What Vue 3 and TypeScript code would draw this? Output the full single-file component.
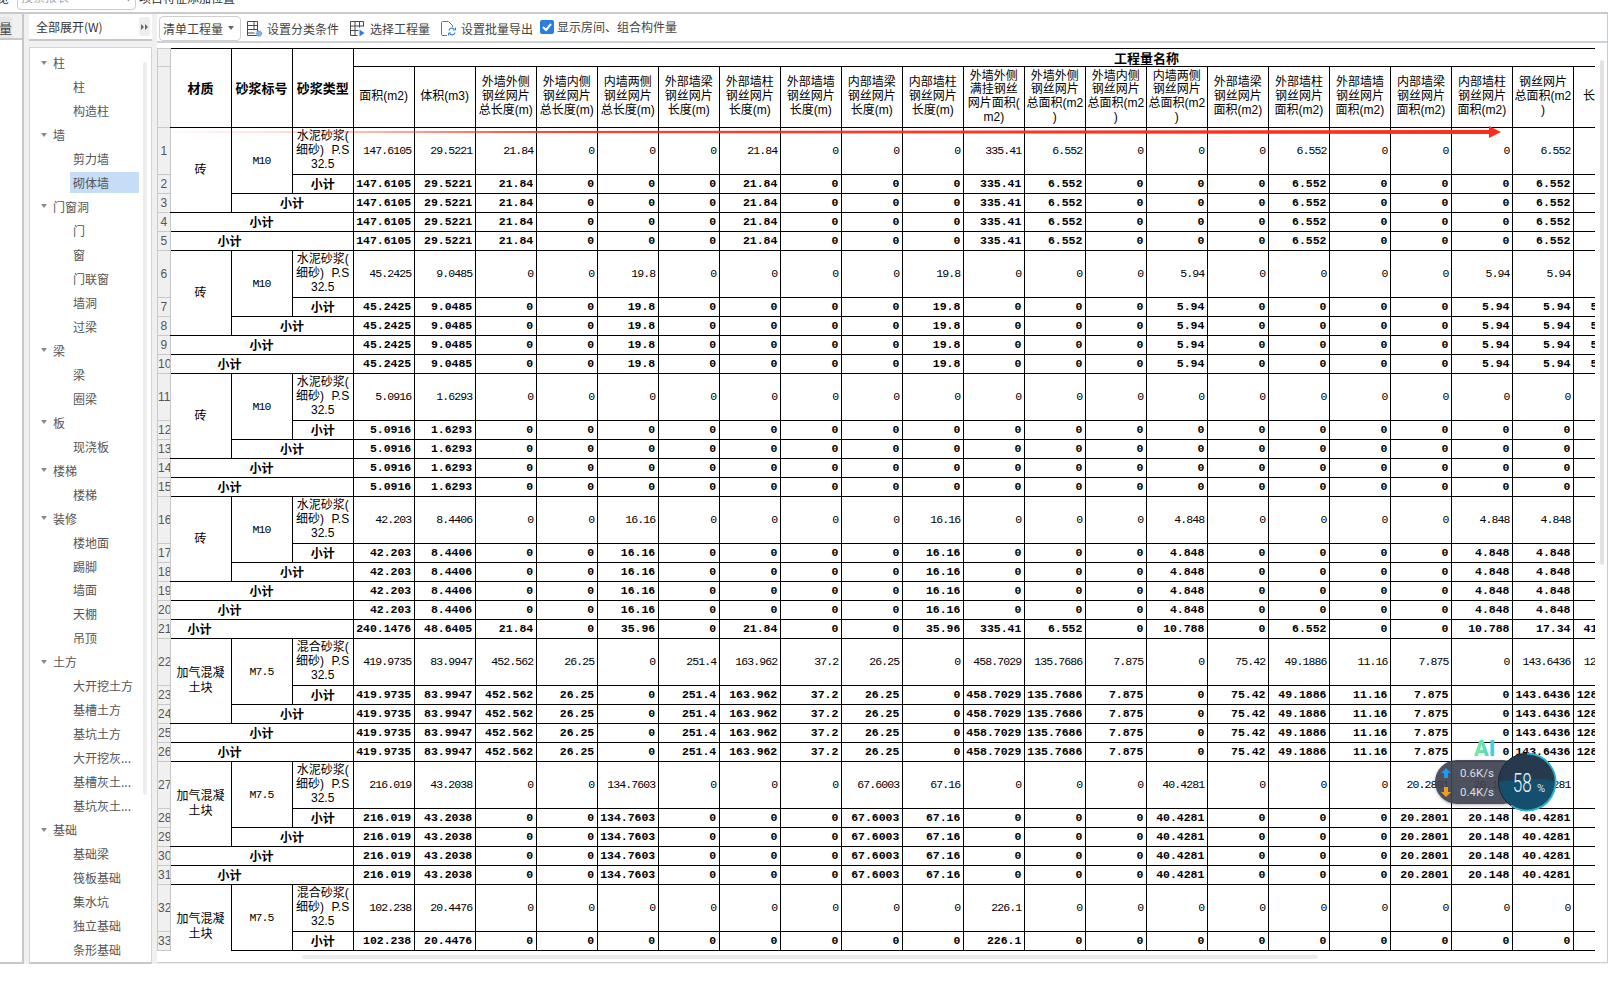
<template>
  <div class="page">
    <div class="topbar">
      <span class="top-cut">览</span>
      <div class="search">
        <span>搜索报表</span>
        <svg class="search-ico" viewBox="0 0 12 12" fill="none" stroke="#999" stroke-width="1.4">
          <circle cx="5" cy="5" r="3.6" />
          <path d="M8 8l3 3" />
        </svg>
      </div>
      <span class="top-title">项目特征添加位置</span>
    </div>

    <div class="workspace">
      <div class="nav">
        <div class="nav-tab">量</div>
        <div class="nav-body"></div>
      </div>

      <div class="tree-col">
        <div class="expand-bar">
          <span>全部展开(W)</span>
          <div class="expand-btn">
            <svg viewBox="0 0 8 6" width="8" height="6" fill="#666"><path d="M0 0l3 3-3 3zM4 0l3 3-3 3z" /></svg>
          </div>
        </div>
        <div class="tree">
          <div
            v-for="(t, i) in tree"
            :key="i"
            class="tree-row"
            :class="t.group ? 'is-group' : 'is-leaf'"
          >
            <i v-if="t.group" class="caret"></i>
            <span :class="{ selected: t.name === '砌体墙' }">{{ t.name }}</span>
          </div>
          <div class="tree-thumb"></div>
        </div>
      </div>

      <div class="main">
        <div class="toolbar">
          <div class="select">
            <span>清单工程量</span>
            <i class="caret small"></i>
          </div>
          <div class="tool first">
            <svg viewBox="0 0 17 17" width="17" height="17" fill="none" stroke="#4a4a4a">
              <path d="M1.5 1.5h10v14h-10zM1.5 5.5h10M1.5 9.5h10M1.5 13h7M8 1.5v8" />
              <circle cx="13" cy="13.5" r="2.8" fill="#7fb0e8" stroke="#5b93d8" stroke-dasharray="1 1" />
            </svg>
            <span>设置分类条件</span>
          </div>
          <div class="tool">
            <svg viewBox="0 0 17 17" width="17" height="17" fill="none" stroke="#4a4a4a">
              <path d="M1.5 1.5h13v5M1.5 1.5v14h7M1.5 6h13M1.5 10.5h8M6 1.5v14M10.5 1.5v6" />
              <path d="M10.5 9.5l5 3.5-5 3.5z" fill="#2a7de1" stroke="none" />
            </svg>
            <span>选择工程量</span>
          </div>
          <div class="tool">
            <svg viewBox="0 0 17 17" width="17" height="17" fill="none" stroke="#4a4a4a">
              <path d="M7 15.5H2.5a1 1 0 0 1-1-1v-12a1 1 0 0 1 1-1h6l4 4v1.500" stroke="#3a7fd5" />
              <path d="M9 10.500a3 3 0 0 1 5.500-1M15 12.500a3 3 0 0 1-5.500 1" stroke="#3a7fd5" stroke-width="1.300" />
              <path d="M15.500 7.500v2.500h-2.500M8.500 15.500v-2.500h2.500" stroke="#3a7fd5" />
            </svg>
            <span>设置批量导出</span>
          </div>
          <label class="check">
            <span class="check-box">
              <svg viewBox="0 0 14 14" width="14" height="14" fill="none" stroke="#fff" stroke-width="2"><path d="M3 7l3 3 5-6" /></svg>
            </span>
            <span>显示房间、组合构件量</span>
          </label>
        </div>

        <div class="grid-wrap">
          <table class="grid">
            <colgroup>
              <col class="col-rn" />
              <col v-for="n in 24" :key="n" class="col-data" />
            </colgroup>
            <thead>
              <tr class="head-a">
                <td class="rn"></td>
                <td rowspan="2" class="head-b">材质</td>
                <td rowspan="2" class="head-b">砂浆标号</td>
                <td rowspan="2" class="head-b">砂浆类型</td>
                <td colspan="21" class="head-b head-title">工程量名称</td>
              </tr>
              <tr class="head-c">
                <td class="rn"></td>
                <td v-for="(h, i) in columns" :key="i" class="head-col">
                  <span v-for="l in h" :key="l" class="ln">{{ l }}</span>
                </td>
              </tr>
            </thead>
            <tbody>
              <tr v-for="r in rows" :key="r.n" :class="r.tall ? 'tall' : 'short'">
                <td class="rn">{{ r.n }}</td>
                <td
                  v-for="(c, i) in r.heads"
                  :key="i"
                  :rowspan="c.rowspan"
                  :colspan="c.colspan"
                  :class="c.cls"
                >
                  <span v-for="l in c.lines" :key="l" class="ln">{{ l }}</span>
                </td>
                <td v-for="(v, i) in r.vals" :key="i" class="num" :class="{ strong: r.bold }">{{ v }}</td>
              </tr>
            </tbody>
          </table>
        </div>

        <div class="v-thumb"></div>
        <div class="h-thumb"></div>
      </div>
    </div>

    <!-- 红色标注箭头 -->
    <svg class="red-arrow" viewBox="0 0 1330 14" width="1330" height="14">
      <defs>
        <linearGradient id="fade" x1="0" x2="1" y1="0" y2="0">
          <stop offset="0" stop-color="#ff2a1a" stop-opacity="0.05" />
          <stop offset="0.3" stop-color="#ff2a1a" stop-opacity="0.9" />
          <stop offset="1" stop-color="#ff2a1a" />
        </linearGradient>
      </defs>
      <path d="M0 6.500L1318 5V1l12 6-12 6V9L0 7.500z" fill="url(#fade)" />
    </svg>

    <!-- 悬浮网速球 -->
    <div class="ai-mark">AI</div>
    <div class="speed">
      <div class="speed-row">
        <svg viewBox="0 0 10 10" width="10" height="10" fill="#1e9bf0"><path d="M5 0l5 5H7v5H3V5H0z" /></svg>
        <span>0.6K/s</span>
      </div>
      <div class="speed-row">
        <svg viewBox="0 0 10 10" width="10" height="10" fill="#f29b1c"><path d="M5 10L0 5h3V0h4v5h3z" /></svg>
        <span>0.4K/s</span>
      </div>
    </div>
    <svg class="ball" viewBox="0 0 60 60" width="60" height="60">
      <circle cx="30" cy="30" r="29" fill="#26394d" />
      <path d="M2 30c8-4 14 0 20-1 2-6 6-8 9-9 0 4 3 6 6 7 6 1 14-1 21 3 0 16-13 28-28 28S2 46 2 30z" fill="#14506e" />
      <circle cx="30" cy="30" r="28.500" fill="none" stroke="#1c2a38" stroke-width="1" />
      <path d="M30 1.500A28.500 28.500 0 1 1 14 53.600" fill="none" stroke="#2bb5d0" stroke-width="1.800" />
      <text class="ball-num" transform="translate(15.700 39.700) scale(0.64 1)">58</text>
      <text x="40" y="39.700" class="ball-pct">%</text>
    </svg>
  </div>
</template>

<script setup lang="ts">
type Cell = {
  lines: string[]
  rowspan?: number
  colspan?: number
  cls?: string
}

type Row = {
  n: number
  tall: boolean
  bold: boolean
  heads: Cell[]
  vals: string[]
}

const groupNames = ['柱', '墙', '门窗洞', '梁', '板', '楼梯', '装修', '土方', '基础']

const tree = [
  '柱', '柱 ', '构造柱', '墙', '剪力墙', '砌体墙', '门窗洞', '门', '窗', '门联窗', '墙洞', '过梁',
  '梁', '梁 ', '圈梁', '板', '现浇板', '楼梯', '楼梯 ', '装修', '楼地面', '踢脚', '墙面', '天棚', '吊顶',
  '土方', '大开挖土方', '基槽土方', '基坑土方', '大开挖灰...', '基槽灰土...', '基坑灰土...',
  '基础', '基础梁', '筏板基础', '集水坑', '独立基础', '条形基础',
].map((s) => ({ name: s.trim(), group: groupNames.includes(s) }))

const columns = [
  ['面积(m2)'],
  ['体积(m3)'],
  ['外墙外侧', '钢丝网片', '总长度(m)'],
  ['外墙内侧', '钢丝网片', '总长度(m)'],
  ['内墙两侧', '钢丝网片', '总长度(m)'],
  ['外部墙梁', '钢丝网片', '长度(m)'],
  ['外部墙柱', '钢丝网片', '长度(m)'],
  ['外部墙墙', '钢丝网片', '长度(m)'],
  ['内部墙梁', '钢丝网片', '长度(m)'],
  ['内部墙柱', '钢丝网片', '长度(m)'],
  ['外墙外侧', '满挂钢丝', '网片面积(', 'm2)'],
  ['外墙外侧', '钢丝网片', '总面积(m2', ')'],
  ['外墙内侧', '钢丝网片', '总面积(m2', ')'],
  ['内墙两侧', '钢丝网片', '总面积(m2', ')'],
  ['外部墙梁', '钢丝网片', '面积(m2)'],
  ['外部墙柱', '钢丝网片', '面积(m2)'],
  ['外部墙墙', '钢丝网片', '面积(m2)'],
  ['内部墙梁', '钢丝网片', '面积(m2)'],
  ['内部墙柱', '钢丝网片', '面积(m2)'],
  ['钢丝网片', '总面积(m2', ')'],
  ['长度(m)'],
]

const SANDS = ['水泥砂浆(', '细砂) P.S', '32.5']
const MIXED = ['混合砂浆(', '细砂) P.S', '32.5']
const BLOCK = ['加气混凝', '土块']
const SUB = ['小计']

function parse(s: string) {
  return s.split(' ').map((v) => (v === '-' ? '' : v))
}

const groups = [
  { start: 1, mat: ['砖'], mark: 'M10', type: SANDS, vals: parse('147.6105 29.5221 21.84 0 0 0 21.84 0 0 0 335.41 6.552 0 0 0 6.552 0 0 0 6.552 -') },
  { start: 6, mat: ['砖'], mark: 'M10', type: SANDS, vals: parse('45.2425 9.0485 0 0 19.8 0 0 0 0 19.8 0 0 0 5.94 0 0 0 0 5.94 5.94 59.400') },
  { start: 11, mat: ['砖'], mark: 'M10', type: SANDS, vals: parse('5.0916 1.6293 0 0 0 0 0 0 0 0 0 0 0 0 0 0 0 0 0 0 -') },
  { start: 16, mat: ['砖'], mark: 'M10', type: SANDS, vals: parse('42.203 8.4406 0 0 16.16 0 0 0 0 16.16 0 0 0 4.848 0 0 0 0 4.848 4.848 -') },
  { start: 22, mat: BLOCK, mark: 'M7.5', type: MIXED, vals: parse('419.9735 83.9947 452.562 26.25 0 251.4 163.962 37.2 26.25 0 458.7029 135.7686 7.875 0 75.42 49.1886 11.16 7.875 0 143.6436 128.2560') },
  { start: 27, mat: BLOCK, mark: 'M7.5', type: SANDS, vals: parse('216.019 43.2038 0 0 134.7603 0 0 0 67.6003 67.16 0 0 0 40.4281 0 0 0 20.2801 20.148 40.4281 -') },
]

const rows: Row[] = []

for (const g of groups) {
  const n = g.start
  rows.push({
    n,
    tall: true,
    bold: false,
    vals: g.vals,
    heads: [
      { lines: g.mat, rowspan: 3, cls: 'label mat' },
      { lines: [g.mark], rowspan: 2, cls: 'label mark' },
      { lines: g.type, cls: 'label' },
    ],
  })
  rows.push({ n: n + 1, tall: false, bold: true, vals: g.vals, heads: [{ lines: SUB, cls: 'label sub' }] })
  rows.push({ n: n + 2, tall: false, bold: true, vals: g.vals, heads: [{ lines: SUB, colspan: 2, cls: 'label sub' }] })
  rows.push({ n: n + 3, tall: false, bold: true, vals: g.vals, heads: [{ lines: SUB, colspan: 3, cls: 'label sub' }] })
  rows.push({ n: n + 4, tall: false, bold: true, vals: g.vals, heads: [{ lines: SUB, colspan: 3, cls: 'label sub shift-a' }] })
}

// 第 21 行是合计，最后一组只露出两行
rows.push({
  n: 21,
  tall: false,
  bold: true,
  vals: parse('240.1476 48.6405 21.84 0 35.96 0 21.84 0 0 35.96 335.41 6.552 0 10.788 0 6.552 0 0 10.788 17.34 41.6600'),
  heads: [{ lines: SUB, colspan: 3, cls: 'label sub shift-b' }],
})

const lastVals = parse('102.238 20.4476 0 0 0 0 0 0 0 0 226.1 0 0 0 0 0 0 0 0 0 -')
rows.push({
  n: 32,
  tall: true,
  bold: false,
  vals: lastVals,
  heads: [
    { lines: BLOCK, rowspan: 2, cls: 'label mat open-bottom' },
    { lines: ['M7.5'], rowspan: 2, cls: 'label mark' },
    { lines: MIXED, cls: 'label' },
  ],
})
rows.push({ n: 33, tall: false, bold: true, vals: lastVals, heads: [{ lines: SUB, cls: 'label sub' }] })

rows.sort((a, b) => a.n - b.n)
</script>

<style>
html,
body {
  margin: 0;
  background: #fff;
}
</style>

<style scoped>
.page {
  position: relative;
  width: 1608px;
  height: 985px;
  overflow: hidden;
  background: #fff;
  color: #444;
  font-family: "Noto Sans CJK SC", "Liberation Sans", sans-serif;
  font-size: 12px;
}

.topbar {
  display: flex;
  align-items: flex-end;
  height: 14px;
  box-sizing: border-box;
  border-bottom: 2px solid #c8cacc;
  overflow: hidden;
  font-size: 12px;
  line-height: 16px;
}

.top-cut {
  width: 17px;
  margin-bottom: 6px;
  margin-left: -3px;
  flex: none;
  color: #333;
}

.search {
  display: flex;
  justify-content: space-between;
  width: 119px;
  height: 22px;
  margin-left: 3px;
  box-sizing: border-box;
  padding: 0 5px 0 3px;
  border: 1px solid #ccc;
  border-radius: 4px;
  margin-bottom: 2px;
  color: #aaa;
  flex: none;
}

.search-ico {
  width: 10px;
  height: 10px;
  margin-top: 3px;
}

.top-title {
  margin-left: 3px;
  margin-bottom: 6px;
  color: #333;
}

.workspace {
  display: flex;
  height: 950px;
  background: #f0f0f0;
}

.nav {
  width: 24px;
  flex: none;
  display: flex;
  flex-direction: column;
  box-sizing: border-box;
  border-right: 2px solid #c8c8c8;
  border-bottom: 2px solid #c8c8c8;
}

.nav-tab {
  display: flex;
  align-items: center;
  justify-content: flex-end;
  width: 12px;
  height: 21px;
  margin-top: 3px;
  background: #e6e6e6;
  border-radius: 0 3px 0 0;
  overflow: hidden;
  font-size: 13px;
}

.nav-body {
  flex: 1;
  background: #fff;
  border-top: 2px solid #c8c8c8;
}

.tree-col {
  width: 123px;
  flex: none;
  margin-left: 5px;
  display: flex;
  flex-direction: column;
}

.expand-bar {
  display: flex;
  align-items: center;
  justify-content: space-between;
  height: 27px;
  box-sizing: border-box;
  padding: 0 2px 0 7px;
  background: #fff;
  border-bottom: 2px solid #c8c8c8;
  color: #333;
  font-size: 12px;
}

.expand-btn {
  display: flex;
  align-items: center;
  justify-content: center;
  width: 11px;
  height: 19px;
  background: #eee;
  border-radius: 3px;
}

.tree {
  position: relative;
  flex: 1;
  margin-top: 6px;
  padding-top: 2.700px;
  overflow: hidden;
  background: #fff;
  box-sizing: border-box;
  border: 1px solid #d4d4d4;
  border-bottom: 2px solid #c8c8c8;
}

.tree-row {
  display: flex;
  align-items: center;
  height: 23.970px;
  flex: none;
  color: #555;
  white-space: nowrap;
}

.tree-row.is-group {
  padding-left: 11px;
}

.tree-row.is-leaf {
  padding-left: 43px;
}

.tree-row .selected {
  margin-left: -3px;
  padding: 2px 13px 2px 3px;
  background: #c6ddf7;
  line-height: 17px;
  width: 53px;
}

.caret {
  width: 0;
  height: 0;
  margin-right: 6px;
  border-left: 3.500px solid transparent;
  border-right: 3.500px solid transparent;
  border-top: 4px solid #8a8a8a;
}

.caret.small {
  margin-right: 0;
  border-left-width: 3px;
  border-right-width: 3px;
  border-top-color: #666;
}

.tree-thumb {
  position: absolute;
  top: 14px;
  left: 113px;
  width: 4px;
  height: 733px;
  background: #ededed;
  border-radius: 2px;
}

.main {
  position: relative;
  flex: 1;
  margin-left: 5px;
  background: #fff;
  box-sizing: border-box;
  border-right: 1px solid #c8cacc;
  border-bottom: 1px solid #c8cacc;
  margin-bottom: 1px;
}

.toolbar {
  display: flex;
  align-items: center;
  height: 29px;
  box-sizing: border-box;
  padding-left: 2px;
  border-bottom: 2px solid #cfd1d3;
  color: #444;
}

.select {
  display: flex;
  align-items: center;
  justify-content: space-between;
  width: 82px;
  height: 25px;
  box-sizing: border-box;
  padding: 0 6px 0 3px;
  border: 1px solid #cfcfcf;
  border-radius: 4px;
  margin-top: 1px;
}

.tool {
  display: flex;
  align-items: center;
  gap: 4px;
  margin-left: 10px;
  margin-top: 2px;
  white-space: nowrap;
}

.tool.first {
  margin-left: 5px;
}

.check {
  display: flex;
  align-items: center;
  gap: 3px;
  margin-left: 7px;
  margin-top: -2px;
}

.check-box {
  display: flex;
  width: 14px;
  height: 14px;
  background: #2a7de1;
  border-radius: 2px;
}

.grid-wrap {
  width: 1438px;
  margin-top: 5px;
  overflow: hidden;
}

.grid {
  table-layout: fixed;
  border-collapse: collapse;
  width: 1477.320px;
  color: #000;
  font-family: "Liberation Sans", "Noto Sans CJK SC", sans-serif;
  font-size: 12px;
  line-height: 13.670px;
}

.col-rn {
  width: 12.600px;
}

.col-data {
  width: 61.030px;
}

.grid td {
  padding: 0;
  border-top: 1px solid #000;
  border-bottom: 1px solid #000;
  border-right: 1px solid #000;
  text-align: center;
  vertical-align: middle;
  overflow: hidden;
  white-space: nowrap;
}

.grid td.rn {
  border: 1px solid #c8c8c8;
  background: #f0f0f0;
  color: #555;
  font-size: 12px;
  line-height: 12px;
}

.head-a {
  height: 18px;
}

.head-c {
  height: 61px;
}

.grid td.head-b {
  font-weight: 700;
  font-size: 13px;
  font-family: "Noto Sans CJK SC", sans-serif;
}

.grid td.head-title {
  padding-left: 305px;
}

.ln {
  display: block;
}

.short {
  height: 19px;
}

.tall {
  height: 47px;
}

.grid td.num {
  padding-right: 2.500px;
  text-align: right;
  font-family: "Liberation Mono", monospace;
  font-size: 11.500px;
  letter-spacing: -0.900px;
}

.grid td.num.strong {
  font-size: 11.500px;
  font-weight: 700;
  letter-spacing: -0.030px;
}

.grid td.label {
  word-spacing: 4px;
}

.grid td.mat {
  line-height: 15px;
}

.grid td.mark {
  font-family: "Liberation Mono", monospace;
  font-size: 11.500px;
  letter-spacing: -0.900px;
}

.grid td.sub {
  font-weight: 700;
  font-family: "Noto Sans CJK SC", sans-serif;
}

.grid td.shift-a {
  padding-right: 64px;
}

.grid td.shift-b {
  padding-right: 124px;
}

.grid td.open-bottom {
  padding-top: 18px;
  border-bottom: none;
}

.v-thumb {
  position: absolute;
  top: 46px;
  right: 3px;
  width: 4px;
  height: 505px;
  background: #e3e3e3;
  border-radius: 2px;
}

.h-thumb {
  position: absolute;
  left: 145px;
  bottom: 3px;
  width: 1016px;
  height: 4px;
  background: #ececec;
  border-radius: 2px;
}

.red-arrow {
  position: absolute;
  left: 171px;
  top: 125px;
}

.ai-mark {
  position: absolute;
  left: 1474px;
  top: 737px;
  font-family: Roboto, sans-serif;
  font-size: 22px;
  line-height: 24px;
  font-weight: 900;
  background: linear-gradient(90deg, #7df08c, #38c8f0);
  -webkit-background-clip: text;
  background-clip: text;
  color: transparent;
}

.speed {
  position: absolute;
  left: 1435px;
  top: 760px;
  width: 90px;
  height: 44px;
  box-sizing: border-box;
  padding: 3px 0 3px 6px;
  display: flex;
  flex-direction: column;
  justify-content: space-around;
  background: rgba(62, 66, 80, 0.92);
  border-radius: 22px;
  color: #dcdfe4;
  font-family: Roboto, sans-serif;
  font-size: 11.500px;
  box-shadow: 0 1px 3px rgba(0, 0, 0, 0.3);
}

.speed-row {
  display: flex;
  align-items: center;
  gap: 9px;
}

.ball {
  position: absolute;
  left: 1497px;
  top: 752px;
}

.ball-num {
  font-family: Roboto, sans-serif;
  font-size: 26.700px;
  font-weight: 300;
  fill: #eef3f6;
}

.ball-pct {
  font-family: Roboto, sans-serif;
  font-size: 11px;
  fill: #dfe6ea;
}
</style>
